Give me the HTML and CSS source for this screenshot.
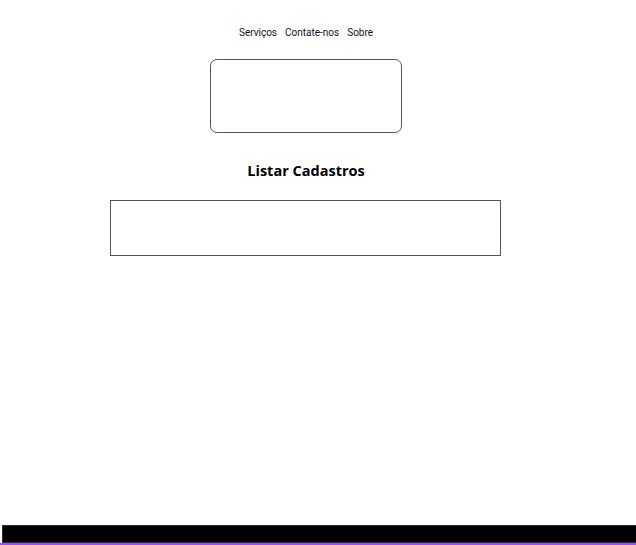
FILE: index.html
```html
<!DOCTYPE html>
<html lang="pt">
<head>
<meta charset="utf-8">
<title>Listar Cadastros</title>
<link rel="stylesheet" href="styles.css">
</head>
<body>
<div class="page">
  <header class="header">
    <nav class="nav">
      <a class="nav-link" href="#">Serviços</a>
      <a class="nav-link" href="#">Contate-nos</a>
      <a class="nav-link" href="#">Sobre</a>
    </nav>
    <div class="logo-box"></div>
  </header>
  <main class="main">
    <h1 class="title">Listar Cadastros</h1>
    <div class="list-box"></div>
  </main>
</div>
<footer class="footer"></footer>
<div class="bottom-line"></div>
</body>
</html>
```
FILE: styles.css
```css
html, body {
  margin: 0;
  padding: 0;
  background: #fff;
}
body {
  height: 545px;
  display: flex;
  flex-direction: column;
  overflow: hidden;
}
.page {
  flex: 1;
  width: 596px;
  padding-left: 8px;
  display: flex;
  flex-direction: column;
  align-items: center;
}
.header {
  display: flex;
  flex-direction: column;
  align-items: center;
  padding-top: 27px;
}
.nav {
  display: flex;
  gap: 8px;
  font-family: Roboto, "Liberation Sans", sans-serif;
  font-size: 10px;
  line-height: 12px;
}
.nav-link {
  color: #111;
  text-decoration: none;
}
.logo-box {
  margin-top: 20px;
  width: 190px;
  height: 72px;
  border: 1px solid #555;
  border-radius: 7px;
}
.main {
  display: flex;
  flex-direction: column;
  align-items: center;
}
.title {
  margin: 27px 0 0;
  font-family: "Open Sans", sans-serif;
  font-weight: 700;
  font-size: 14.5px;
  line-height: 22px;
  color: #000;
}
.list-box {
  margin-top: 18px;
  margin-right: 2px;
  width: 389px;
  height: 54px;
  border: 1px solid #555;
}
.footer {
  margin-left: 2px;
  height: 16px;
  background: #000;
  border: 1px solid #2a2a2a;
  border-right: none;
}
.bottom-line {
  height: 2px;
  background: #9b4dff;
}
```
